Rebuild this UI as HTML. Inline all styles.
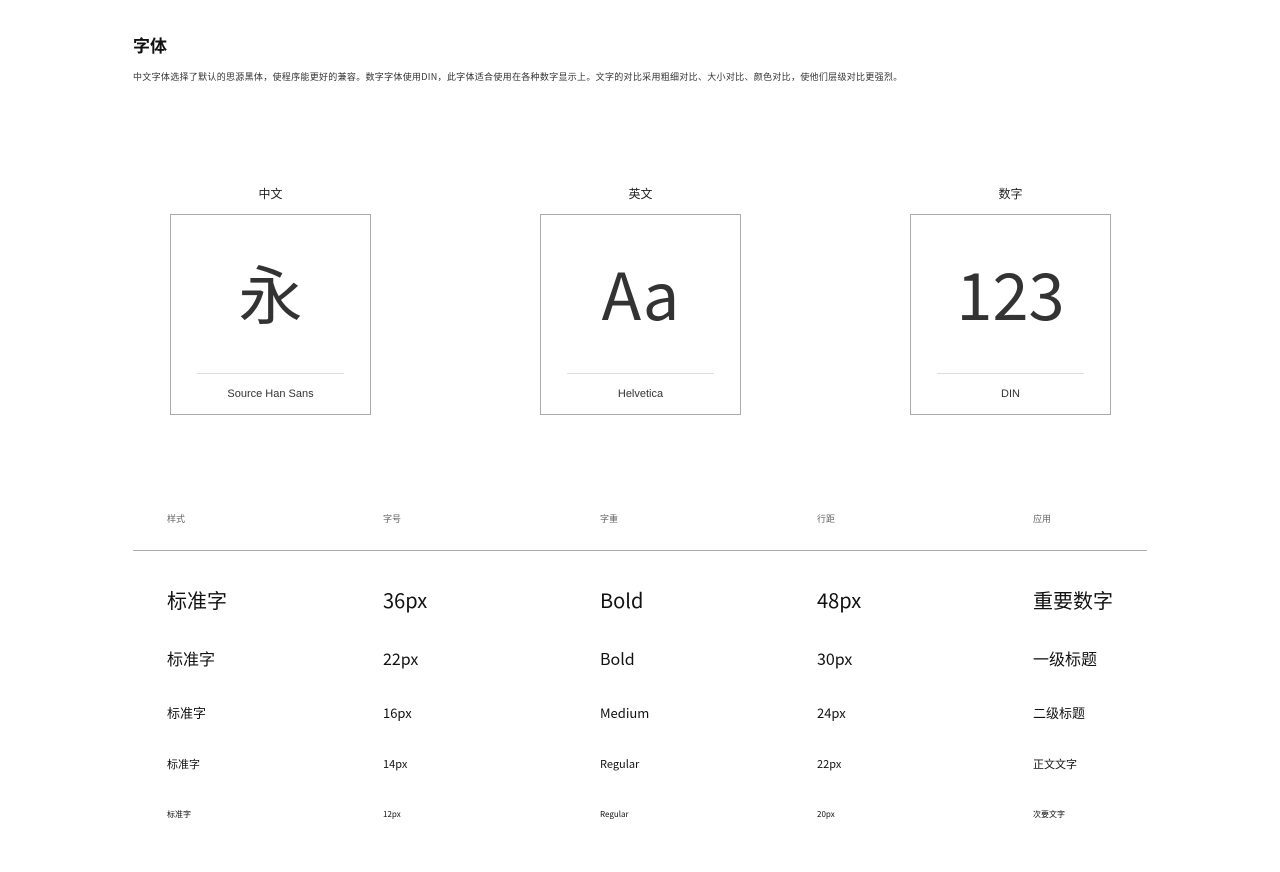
<!DOCTYPE html>
<html><head><meta charset="utf-8"><style>
body{margin:0;width:1280px;height:872px;background:#fff;font-family:"Liberation Sans","Noto Sans CJK SC",sans-serif;color:#111;position:relative;overflow:hidden}
.a{position:absolute;white-space:nowrap;line-height:1}
.box{position:absolute;top:214px;width:199px;height:199px;border:1px solid #aaa}
.box .g{position:absolute;left:0;right:0;top:45px;text-align:center;font-family:"Noto Sans CJK SC",sans-serif;font-size:64px;line-height:64px;color:#333;font-weight:400}
.box .l{position:absolute;left:26px;right:26px;top:158px;border-top:1px solid #ddd}
.box .c{position:absolute;left:0;right:0;top:173px;text-align:center;font-size:11px;color:#333}
.lab{position:absolute;top:185px;width:201px;text-align:center;font-size:12px;font-family:"Noto Sans CJK SC",sans-serif;color:#222}
.h{top:514px;font-size:9px;color:#666;font-family:"Noto Sans CJK SC",sans-serif}
.n{font-family:"Noto Sans CJK SC",sans-serif;color:#111}
</style></head><body>
<div class="a n" style="left:133px;top:36px;font-size:17px;font-weight:700">字体</div>
<div class="a n" style="left:133px;top:72px;font-size:9px;letter-spacing:0.3px;color:#333">中文字体选择了默认的思源黑体，使程序能更好的兼容。数字字体使用DIN，此字体适合使用在各种数字显示上。文字的对比采用粗细对比、大小对比、颜色对比，使他们层级对比更强烈。</div>

<div class="lab" style="left:170px">中文</div>
<div class="lab" style="left:540px">英文</div>
<div class="lab" style="left:910px">数字</div>
<div class="box" style="left:170px"><div class="g">永</div><div class="l"></div><div class="c">Source Han Sans</div></div>
<div class="box" style="left:540px"><div class="g" style="font-size:65px">Aa</div><div class="l"></div><div class="c">Helvetica</div></div>
<div class="box" style="left:910px"><div class="g" style="font-size:65px">123</div><div class="l"></div><div class="c">DIN</div></div>

<div class="a h" style="left:167px">样式</div>
<div class="a h" style="left:383px">字号</div>
<div class="a h" style="left:600px">字重</div>
<div class="a h" style="left:817px">行距</div>
<div class="a h" style="left:1033px">应用</div>
<div style="position:absolute;left:133px;top:550px;width:1014px;border-top:1px solid #aaa"></div>

<div class="a n" style="left:167px;top:590px;font-size:20px">标准字</div>
<div class="a n" style="left:383px;top:590px;font-size:20px">36px</div>
<div class="a n" style="left:600px;top:590px;font-size:20px">Bold</div>
<div class="a n" style="left:817px;top:590px;font-size:20px">48px</div>
<div class="a n" style="left:1033px;top:590px;font-size:20px">重要数字</div>

<div class="a n" style="left:167px;top:650px;font-size:16px">标准字</div>
<div class="a n" style="left:383px;top:650px;font-size:16px">22px</div>
<div class="a n" style="left:600px;top:650px;font-size:16px">Bold</div>
<div class="a n" style="left:817px;top:650px;font-size:16px">30px</div>
<div class="a n" style="left:1033px;top:650px;font-size:16px">一级标题</div>

<div class="a n" style="left:167px;top:706px;font-size:13px">标准字</div>
<div class="a n" style="left:383px;top:706px;font-size:13px">16px</div>
<div class="a n" style="left:600px;top:706px;font-size:13px">Medium</div>
<div class="a n" style="left:817px;top:706px;font-size:13px">24px</div>
<div class="a n" style="left:1033px;top:706px;font-size:13px">二级标题</div>

<div class="a n" style="left:167px;top:759px;font-size:11px">标准字</div>
<div class="a n" style="left:383px;top:759px;font-size:11px">14px</div>
<div class="a n" style="left:600px;top:759px;font-size:11px">Regular</div>
<div class="a n" style="left:817px;top:759px;font-size:11px">22px</div>
<div class="a n" style="left:1033px;top:759px;font-size:11px">正文文字</div>

<div class="a n" style="left:167px;top:811px;font-size:8px">标准字</div>
<div class="a n" style="left:383px;top:811px;font-size:8px">12px</div>
<div class="a n" style="left:600px;top:811px;font-size:8px">Regular</div>
<div class="a n" style="left:817px;top:811px;font-size:8px">20px</div>
<div class="a n" style="left:1033px;top:811px;font-size:8px">次要文字</div>
</body></html>
